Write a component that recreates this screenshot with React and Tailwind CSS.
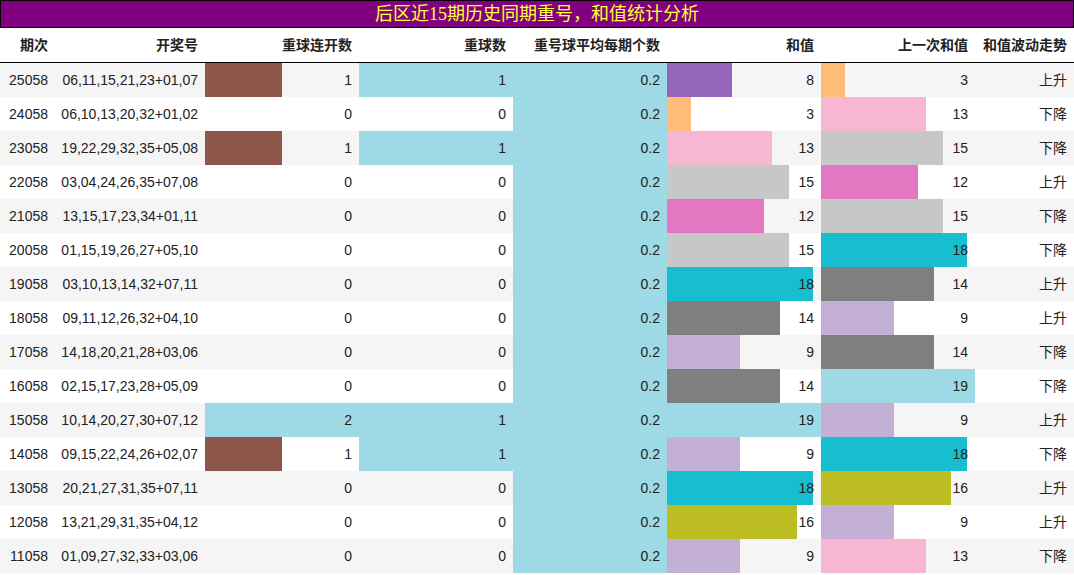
const C={1:'#8c564b',2:'#9edae5',3:'#ffbb78',8:'#9467bd',9:'#c5b0d5',12:'#e377c2',13:'#f7b6d2',14:'#7f7f7f',15:'#c7c7c7',16:'#bcbd22',18:'#17becf',19:'#9edae5'};
const rows=[
['25058','06,11,15,21,23+01,07',1,1,8,3,'上升'],
['24058','06,10,13,20,32+01,02',0,0,3,13,'下降'],
['23058','19,22,29,32,35+05,08',1,1,13,15,'下降'],
['22058','03,04,24,26,35+07,08',0,0,15,12,'上升'],
['21058','13,15,17,23,34+01,11',0,0,12,15,'下降'],
['20058','01,15,19,26,27+05,10',0,0,15,18,'下降'],
['19058','03,10,13,14,32+07,11',0,0,18,14,'上升'],
['18058','09,11,12,26,32+04,10',0,0,14,9,'上升'],
['17058','14,18,20,21,28+03,06',0,0,9,14,'下降'],
['16058','02,15,17,23,28+05,09',0,0,14,19,'下降'],
['15058','10,14,20,27,30+07,12',2,1,19,9,'上升'],
['14058','09,15,22,24,26+02,07',1,1,9,18,'下降'],
['13058','20,21,27,31,35+07,11',0,0,18,16,'上升'],
['12058','13,21,29,31,35+04,12',0,0,16,9,'上升'],
['11058','01,09,27,32,33+03,06',0,0,9,13,'下降'],
];
function Bar({v,max,color,label}){return(<div className="relative h-full flex items-center justify-end pr-[7px]">
{v>0&&<div className="absolute left-0 top-0 h-full" style={{width:`${v/max*100}%`,background:color}}/>}
<span className="relative">{label??v}</span></div>);}
const grid="grid grid-cols-[55px_150px_154px_154px_154px_154px_154px_99px]";
export default function App(){return(<div className="w-[1074px] h-[575px] bg-white text-[14px] text-[#222]" style={{fontFamily:'"Liberation Sans","Noto Sans CJK SC",sans-serif'}}>
<div className="h-[28px] bg-[#800080] border border-black flex items-center justify-center text-[#ffff33] text-[18px]" style={{fontFamily:'"Liberation Serif","Noto Sans CJK SC",serif'}}>后区近15期历史同期重号，和值统计分析</div>
<div className={`${grid} h-[35px] border-b border-black font-bold items-center`}>
<div className="text-right pr-[7px]">期次</div><div className="text-right pr-[7px]">开奖号</div><div className="text-right pr-[7px]">重球连开数</div><div className="text-right pr-[7px]">重球数</div><div className="text-right pr-[7px]">重号球平均每期个数</div><div className="text-right pr-[7px]">和值</div><div className="text-right pr-[7px]">上一次和值</div><div className="text-right pr-[7px]">和值波动走势</div>
</div>
{rows.map((r,i)=>(<div key={i} className={`${grid} h-[34px] ${i%2==0?'bg-[#f5f5f5]':'bg-white'}`}>
<div className="flex items-center justify-end pr-[7px]">{r[0]}</div>
<div className="flex items-center justify-end pr-[7px]">{r[1]}</div>
<Bar v={r[2]} max={2} color={C[r[2]]}/>
<Bar v={r[3]} max={1} color="#9edae5"/>
<Bar v={1} max={1} color="#9edae5" label="0.2"/>
<Bar v={r[4]} max={19} color={C[r[4]]}/>
<Bar v={r[5]} max={19} color={C[r[5]]}/>
<div className="flex items-center justify-end pr-[7px]">{r[6]}</div>
</div>))}
</div>);}
